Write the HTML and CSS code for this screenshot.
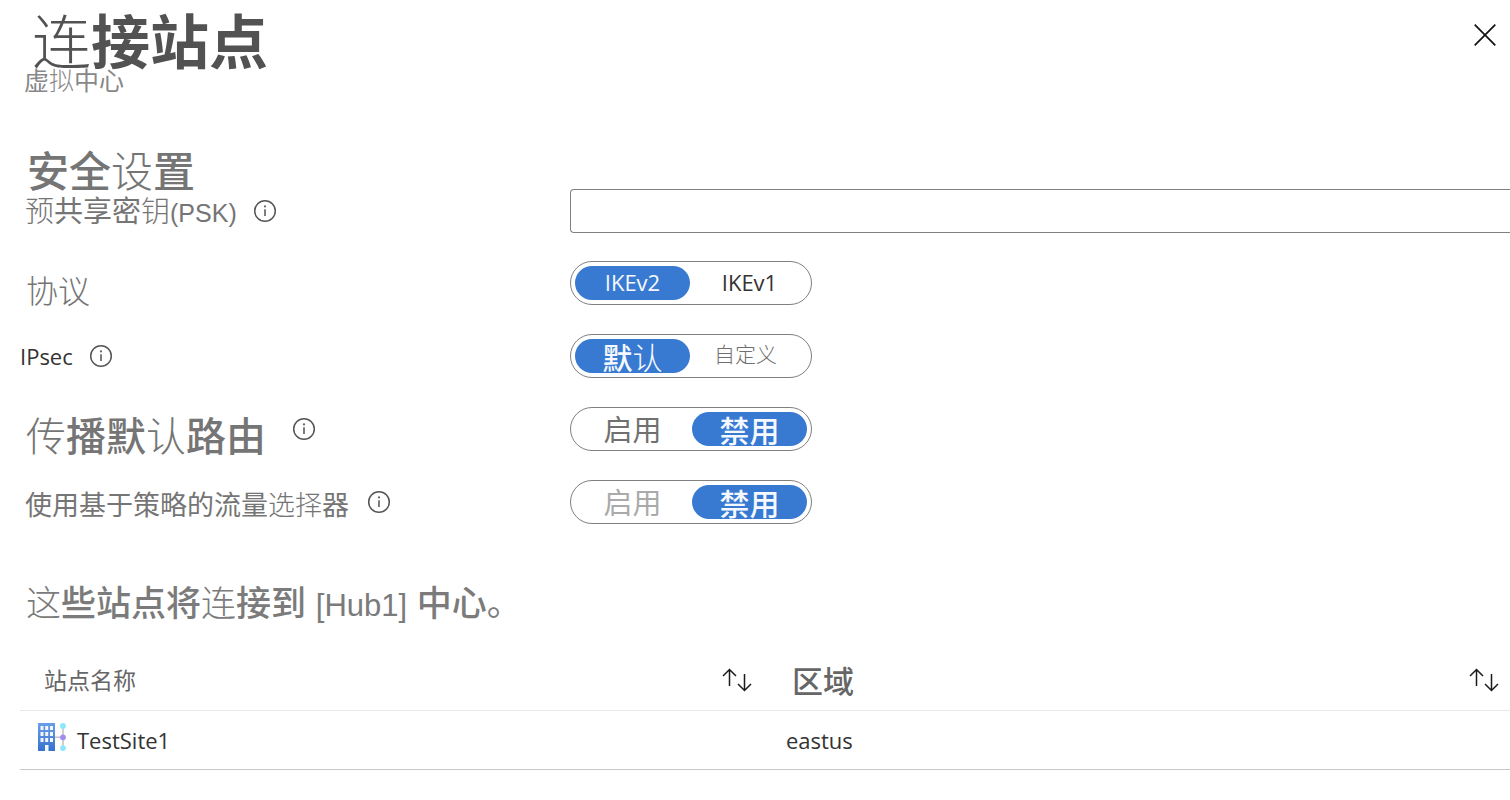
FILE: index.html
```html
<!DOCTYPE html>
<html lang="zh-CN">
<head>
<meta charset="utf-8">
<meta name="viewport" content="width=device-width, initial-scale=1">
<title>连接站点</title>
<link rel="stylesheet" href="styles.css">
</head>
<body>
<svg class="sprite" aria-hidden="true">
  <symbol id="info" viewBox="0 0 24 24"><circle cx="12" cy="12" r="10.3" fill="none" stroke="#555" stroke-width="1.5"/><path d="M12 10.2V17" stroke="#666" stroke-width="1.7"/><circle cx="12" cy="7.4" r="1.1" fill="#666"/></symbol>
  <symbol id="sort" viewBox="0 0 30 24"><path d="M7.5 18V1.5M1 8l6.500-6.500L14 8M22.500 6v16.500M16 16l6.500 6.500L29 16" fill="none" stroke="#1b1b1b" stroke-width="1.5"/></symbol>
</svg>
<main class="panel">
  <header class="panel-header">
    <div>
      <h1 class="title"><span class="thin">连</span>接站点</h1>
      <p class="subtitle">虚<span class="thin">拟</span>中心</p>
    </div>
    <button class="close" type="button" aria-label="关闭">
      <svg viewBox="0 0 22 22" width="22" height="22"><path d="M.7.7l20.600 20.600M21.300.7L.7 21.300" stroke="#111" stroke-width="1.7"/></svg>
    </button>
  </header>

  <form class="settings">
    <h2 class="section-title">安全<span class="thin">设</span>置</h2>
    <div class="row row-first">
      <div class="row-label"><label class="text-psk" for="psk"><span class="thin">预</span>共享密<span class="thin">钥</span><span class="latin">(PSK)</span></label><button class="info" type="button" aria-label="信息"><svg><use href="#info"/></svg></button></div>
      <input class="psk-input" id="psk" type="text">
    </div>
    <div class="row">
      <div class="row-label"><span class="text-protocol thin" id="l-protocol">协议</span></div>
      <div class="toggle" role="radiogroup" aria-labelledby="l-protocol">
        <label class="option"><input type="radio" name="protocol" checked><span class="latin-ui">IKEv2</span></label>
        <label class="option"><input type="radio" name="protocol"><span class="latin-ui">IKEv1</span></label>
      </div>
    </div>
    <div class="row">
      <div class="row-label"><span class="text-ipsec" id="l-ipsec">IPsec</span><button class="info" type="button" aria-label="信息"><svg><use href="#info"/></svg></button></div>
      <div class="toggle" role="radiogroup" aria-labelledby="l-ipsec">
        <label class="option"><input type="radio" name="ipsec" checked><span class="low">默<span class="thin">认</span></span></label>
        <label class="option"><input type="radio" name="ipsec"><span class="small thin">自定义</span></label>
      </div>
    </div>
    <div class="row">
      <div class="row-label"><span class="text-route" id="l-route"><span class="thin">传</span>播默<span class="thin">认</span>路由</span><button class="info" type="button" aria-label="信息"><svg><use href="#info"/></svg></button></div>
      <div class="toggle" role="radiogroup" aria-labelledby="l-route">
        <label class="option"><input type="radio" name="route"><span class="medium">启用</span></label>
        <label class="option"><input type="radio" name="route" checked><span class="low">禁用</span></label>
      </div>
    </div>
    <div class="row">
      <div class="row-label"><span class="text-policy" id="l-policy">使用基于策略的流量<span class="thin">选择</span>器</span><button class="info" type="button" aria-label="信息"><svg><use href="#info"/></svg></button></div>
      <div class="toggle" role="radiogroup" aria-labelledby="l-policy">
        <label class="option"><input type="radio" name="policy" disabled><span class="medium">启用</span></label>
        <label class="option"><input type="radio" name="policy" checked><span class="low">禁用</span></label>
      </div>
    </div>
  </form>

  <h2 class="sites-title"><span class="thin">这</span>些站点将<span class="thin">连</span>接到 <span class="latin">[Hub1]</span> 中心<span class="stop">。</span></h2>
  <table class="sites">
    <colgroup><col class="col-name"><col></colgroup>
    <thead>
      <tr>
        <th scope="col"><div class="head-cell"><span class="head-name">站点名称</span><button class="sort" type="button" aria-label="排序"><svg><use href="#sort"/></svg></button></div></th>
        <th scope="col"><div class="head-cell"><span class="head-region">区域</span><button class="sort" type="button" aria-label="排序"><svg><use href="#sort"/></svg></button></div></th>
      </tr>
    </thead>
    <tbody>
      <tr>
        <td><div class="site">
          <svg class="site-icon" viewBox="0 0 28 28" aria-hidden="true">
            <defs>
              <linearGradient id="tower" x1="0" y1="0" x2="0" y2="1"><stop offset="0" stop-color="#6a9ee8"/><stop offset="1" stop-color="#3673cd"/></linearGradient>
            </defs>
            <path d="M0 0h17v28H0z" fill="url(#tower)"/>
            <path d="M2.500 3h3v4h-3zM7.200 3h3v4h-3zM12 3h3v4h-3zM2.500 9h3v4h-3zM7.200 9h3v4h-3zM12 9h3v4h-3zM2.500 15h3v4h-3zM7.200 15h3v4h-3zM12 15h3v4h-3zM7 22h3.500v6H7z" fill="#f3f6fb"/>
            <path d="M17 14.300h8M25 3v22" stroke="#c4c4c4" stroke-width="1.600" fill="none"/>
            <circle cx="25" cy="3" r="2.900" fill="#8ee6fb"/><circle cx="25" cy="14.300" r="2.900" fill="#a28af0"/><circle cx="25" cy="25.100" r="2.900" fill="#8ee6fb"/>
          </svg>
          <span>TestSite1</span></div></td>
        <td>eastus</td>
      </tr>
    </tbody>
  </table>
</main>
</body>
</html>
```
FILE: styles.css
```css
* { box-sizing: border-box; }
body {
  margin: 0;
  background: #fff;
  color: #333;
  font-family: "Open Sans", "Noto Sans CJK SC", sans-serif;
  font-size: 22px;
}
h1, h2, p { margin: 0; }
button { padding: 0; border: 0; background: none; cursor: pointer; }
button svg { display: block; }
.sprite { position: absolute; width: 0; height: 0; }
.panel { padding-left: 20px; overflow: hidden; }

.title, .subtitle, .section-title, .sites-title, .row-label, .toggle, .sites th {
  font-family: "Liberation Sans", "Noto Sans CJK SC", sans-serif;
  white-space: nowrap;
}
.panel-header { display: flex; justify-content: space-between; padding-top: 12px; }
.title { padding: 2px 0 0 12px; font-size: 59px; line-height: 60px; font-weight: 700; color: #525252; }
.subtitle { padding-left: 4px; font-size: 25px; line-height: 14px; color: #888; }
.close { width: 50px; height: 46px; display: grid; place-items: center; }

.settings { padding-top: 61px; }
.section-title { padding-left: 7px; font-size: 42px; line-height: 48px; font-weight: 500; color: #757575; }
.section-title + .row { margin-top: -8px; }
.row { display: grid; grid-template-columns: 550px 1fr; align-items: center; margin-bottom: 29px; }
.row-first { margin-bottom: 28px; }
.row-label { display: flex; align-items: center; gap: 16px; height: 44px; color: #757575; }
.text-psk { padding: 0 0 4px 5px; font-size: 29px; }
.text-psk .latin { font-size: 25px; }
.text-protocol { padding: 12px 0 0 6px; font-size: 32px; }
.text-ipsec { font-family: "Open Sans", sans-serif; font-size: 22px; color: #333; }
.text-route { padding: 10px 10px 0 6px; font-size: 40px; font-weight: 500; }
.text-policy { padding: 2px 2px 0 5px; font-size: 27px; }
.thin { font-weight: 300; }
.info, .info svg { width: 24px; height: 24px; }
.psk-input {
  width: 100%;
  height: 44px;
  padding: 0 12px;
  border: 1px solid #808080;
  border-right: 0;
  border-radius: 4px 0 0 4px;
  background: #fff;
  font: inherit;
}
.psk-input:focus { outline: none; }

.toggle {
  display: flex;
  justify-self: start;
  gap: 2px;
  padding: 4px;
  border: 1px solid #808080;
  border-radius: 22px;
}
.option {
  display: flex;
  justify-content: center;
  width: 115px;
  height: 34px;
  border-radius: 17px;
  line-height: 34px;
  overflow: hidden;
  color: #707070;
  cursor: pointer;
}
.option input { position: absolute; appearance: none; margin: 0; width: 0; height: 0; }
.option:has(input:checked) { background: #3879d1; color: #f5f9ff; }
.option:has(input:disabled) { color: #aaa; cursor: default; }
.latin-ui { font-family: "Open Sans", sans-serif; font-size: 22px; line-height: 32px; color: #333; }
input:checked + .latin-ui { color: #f5f9ff; }
.low { padding-top: 3px; font-size: 30px; font-weight: 500; }
.medium { padding-top: 2px; font-size: 29px; }
.small { padding-right: 8px; font-size: 21px; line-height: 32px; }

.sites-title { padding: 25px 0 18px 6px; font-size: 35px; line-height: 52px; font-weight: 500; color: #7b7b7b; }
.sites-title .latin { font-size: 31px; font-weight: 400; }
.sites-title .stop { font-weight: 400; }
.sites { width: 100%; border-collapse: collapse; table-layout: fixed; }
.col-name { width: 51%; }
.sites th { padding: 0 11px 0 24px; border-bottom: 1px solid #e8e8e8; text-align: left; color: #666; }
.sites th + th { padding-left: 12px; }
.head-cell { display: flex; align-items: center; justify-content: space-between; height: 60px; }
.sites th:first-child { padding-right: 28px; }
.head-name { padding-bottom: 2px; font-size: 23px; font-weight: 400; }
.head-region { padding-bottom: 2px; font-size: 31px; font-weight: 500; }
.sort, .sort svg { width: 30px; height: 24px; }
.sites td { height: 59px; padding: 0 0 0 6px; border-bottom: 1px solid #c8c8c8; }
.sites td:first-child { padding-left: 18px; }
.site { display: flex; align-items: center; gap: 11px; }
.site-icon { width: 28px; height: 28px; margin-bottom: 6px; }
```
